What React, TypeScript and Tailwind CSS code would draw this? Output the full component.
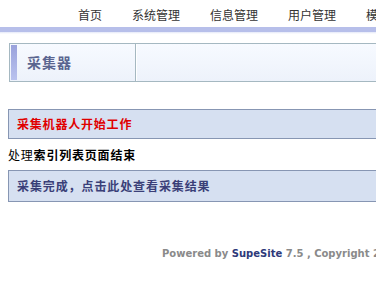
import React from "react";

const cjk = { fontFamily: '"Noto Sans CJK SC", "Noto Sans", sans-serif' };

export default function App() {
  return (
    <div className="w-[383px] h-[281px] bg-white overflow-hidden" style={cjk}>
      <div className="w-[376px] overflow-hidden">
        <div className="w-[600px]">
          <nav className="h-[27px] flex items-center pl-[78px] gap-[30px] text-[12px] text-[#333] pt-[2px]">
            <span>首页</span>
            <span>系统管理</span>
            <span>信息管理</span>
            <span>用户管理</span>
            <span>模板管理</span>
          </nav>
          <div className="h-[5px] w-[376px] bg-[#b7bfea]" />
          <div className="h-[2px] w-[376px] bg-gradient-to-b from-[#e4e8f8] to-white" />
        </div>

        <div className="mt-[9px] ml-[9px] h-[39px] flex border-y border-l border-[#a5b8c1] bg-gradient-to-b from-[#f7faff] to-[#edf2fb]">
          <div className="w-[126px] flex items-center border-r border-[#a5b8c1] pl-[1px]">
            <div className="w-[6px] h-[35px] bg-gradient-to-b from-[#9aa2dc] to-[#b9c2ee]" />
            <span className="ml-[10px] text-[14px] tracking-[1px] font-bold text-[#5a6590]">采集器</span>
          </div>
          <div className="flex-1 border-l border-white" />
        </div>

        <div className="mt-[27px] ml-[8px] h-[30px] flex items-center border-y border-l border-[#8796b3] bg-[#d6e0f1] pl-[8px]">
          <span className="text-[12px] tracking-[0.8px] font-bold text-[#e00000]">采集机器人开始工作</span>
        </div>

        <div className="h-[31px] flex items-center ml-[8px] text-[12px] tracking-[0.8px] text-black">
          <span>处理</span>
          <span className="font-bold">索引列表页面结束</span>
        </div>

        <div className="ml-[8px] h-[32px] flex items-center border-y border-l border-[#8796b3] bg-[#d6e0f1] pl-[8px]">
          <span className="text-[12px] tracking-[0.9px] font-bold text-[#3a3f78]">采集完成，点击此处查看采集结果</span>
        </div>

        <div className="mt-[44px] pl-[162px] whitespace-nowrap text-[10px] font-bold text-[#8a8a8a]" style={{ fontFamily: '"DejaVu Sans", sans-serif' }}>
          Powered by <span className="text-[#2e3a7a]">SupeSite</span> 7.5 , Copyright 2001-2008
        </div>
      </div>
    </div>
  );
}
